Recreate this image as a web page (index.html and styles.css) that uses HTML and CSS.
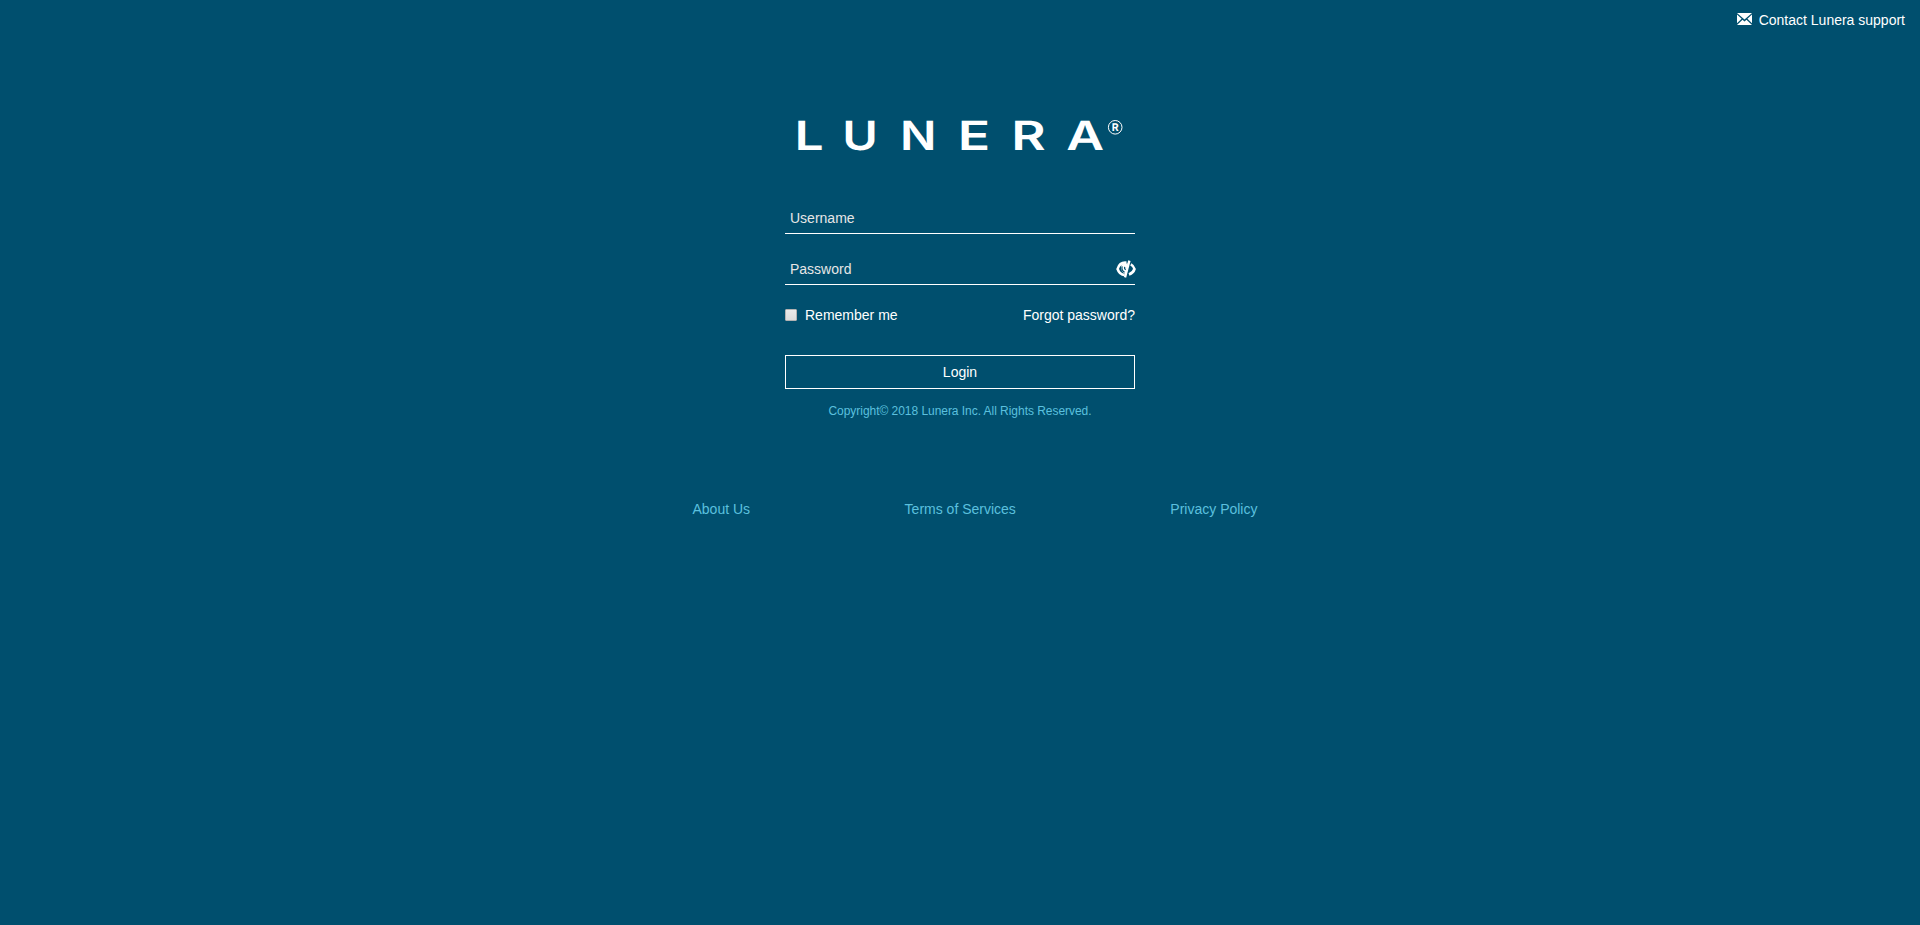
FILE: index.html
```html
<!DOCTYPE html>
<html lang="en">
<head>
<meta charset="utf-8">
<title>Lunera</title>
<link rel="stylesheet" href="styles.css">
</head>
<body>
<header class="topbar">
  <a class="support" href="#">
    <svg class="envelope" viewBox="0 0 15 12"><path d="M0 0H15L7.5 6.5Z M0 1.6L4.6 5.7L0 10.2Z M15 1.6L10.4 5.7L15 10.2Z M0 12L5.5 6.7L7.5 8.4L9.5 6.7L15 12Z"/></svg>
    <span>Contact Lunera support</span>
  </a>
</header>
<main class="login">
  <svg class="logo" viewBox="0 0 350 60" role="img" aria-label="Lunera">
    <g class="wordmark">
      <text transform="translate(9.6 45.3) scale(1.28 1)">L</text>
      <text transform="translate(57.3 45.3) scale(1.2 1)">U</text>
      <text transform="translate(115 45.3) scale(1.19 1)">N</text>
      <text transform="translate(172.7 45.3) scale(1.33 1)">E</text>
      <text transform="translate(226.3 45.3) scale(1.31 1)">R</text>
      <text transform="translate(281.3 45.3) scale(1.29 1)">A</text>
    </g>
    <circle class="ring" cx="330.2" cy="22.3" r="6.8"/>
    <text class="mark" x="326.7" y="26.2">R</text>
  </svg>
  <form class="form">
    <input class="field" type="text" placeholder="Username">
    <div class="password">
      <input class="field" type="password" placeholder="Password">
      <svg class="eye" viewBox="0 0 20 18"><path class="lid" d="M10.5 2.7C6 2.2 2.8 5 1.6 9C2.8 12.6 5.5 14.8 8.7 15M14.8 4.3C17 5.4 18 7 18.5 9C17.8 11.3 16 13.4 13 14.5"/><path class="iris" d="M11.8 3.2L5.6 4.2C4.4 8 5 11.8 9.6 14Z"/><path class="pupil" d="M6.2 6.4C5.4 9 6.3 11 8.6 12.2M8.7 6.9C8.3 8.4 8.8 9.4 10 9.8"/><path class="slash" d="M13.4 0.6L9 17.4"/></svg>
    </div>
    <div class="options">
      <label class="remember"><span class="box"></span>Remember me</label>
      <a class="forgot" href="#">Forgot password?</a>
    </div>
    <button class="submit" type="button">Login</button>
  </form>
  <p class="copyright">Copyright© 2018 Lunera Inc. All Rights Reserved.</p>
</main>
<footer class="links">
  <a href="#">About Us</a>
  <a href="#">Terms of Services</a>
  <a href="#">Privacy Policy</a>
</footer>
</body>
</html>
```
FILE: styles.css
```css
* { box-sizing: border-box; }
body {
  margin: 0;
  min-height: 925px;
  background: #004f6e;
  color: #fff;
  font: 14px/20px "Liberation Sans", Arial, sans-serif;
}
a { color: inherit; text-decoration: none; }
.topbar { display: flex; justify-content: flex-end; height: 105px; padding: 10px 15px 0 0; }
.support { display: flex; align-items: flex-start; gap: 7px; }
.envelope { width: 15px; height: 12px; margin-top: 3px; fill: #fff; }
.login { display: flex; flex-direction: column; width: 350px; margin: 0 auto; }
.logo { display: block; width: 350px; height: 60px; fill: #fff; text-rendering: geometricPrecision; }
.wordmark { font: 600 40.3px Inter, sans-serif; }
.ring { fill: none; stroke: #fff; stroke-width: 1; }
.mark { font: 700 10.5px Inter, sans-serif; }
.form { display: flex; flex-direction: column; padding-top: 36px; }
.field {
  display: block;
  width: 100%;
  height: 33px;
  padding: 1px 5px 0;
  border: 0;
  border-bottom: 1px solid #fff;
  background: transparent;
  color: #fff;
  font: inherit;
}
.field::placeholder { color: #e6e6e6; opacity: 1; }
.password { position: relative; margin-top: 18px; }
.eye { position: absolute; right: -1px; top: 8px; width: 20px; height: 18px; }
.lid { fill: none; stroke: #fff; stroke-width: 2.6; }
.iris { fill: #fff; }
.pupil { fill: none; stroke: #004f6e; stroke-width: 1.2; }
.slash { fill: none; stroke: #fff; stroke-width: 2.4; }
.options { display: flex; justify-content: space-between; margin-top: 20px; }
.remember { display: flex; align-items: center; gap: 8px; }
.box {
  width: 12px;
  height: 12px;
  border: 1px solid #b2b2b2;
  border-radius: 1px;
  background: linear-gradient(#e9e9e9, #dcdcdc);
}
.submit {
  height: 34px;
  margin-top: 30px;
  padding: 0 0 1px;
  border: 1px solid #fff;
  background: transparent;
  color: #fff;
  font: inherit;
}
.copyright { margin: 12px 0 0; color: #5bc0de; font-size: 12px; letter-spacing: -0.04px; text-align: center; }
.links {
  display: flex;
  justify-content: space-between;
  width: 565px;
  margin: 78px auto 0;
  transform: translateX(15px);
  color: #5bc0de;
}
```
